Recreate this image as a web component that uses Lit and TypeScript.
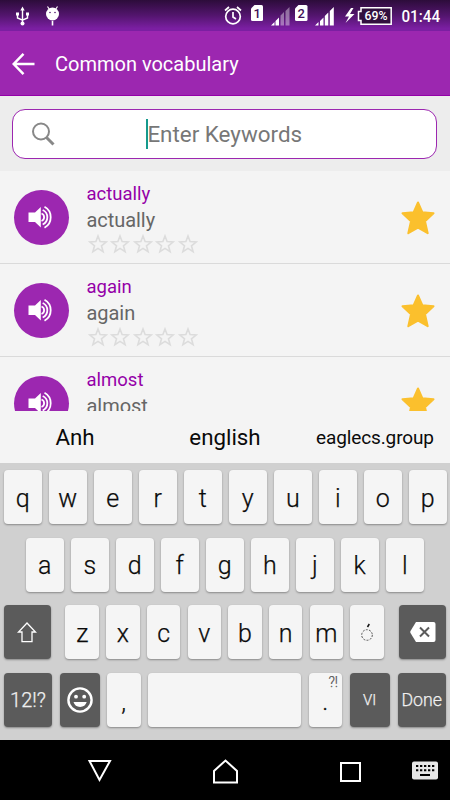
import { LitElement, html, css } from "lit";
import { customElement, property } from "lit/decorators.js";

@customElement("status-bar")
class StatusBar extends LitElement {
  static styles = css`
    :host { display: flex; height: 31px; background: linear-gradient(#2c0c3a, #53156e 50%, #7b1fa2 92%); color: #fff; }
    svg { display: block; width: 450px; height: 31px; }
    text { font-family: Roboto, sans-serif; font-weight: 500; }
  `;
  render() {
    return html`<svg viewBox="0 0 450 31" fill="#fff">
      <g fill="none" stroke="#fff" stroke-width="1.400">
        <path d="M22.500 9v15M17.500 14v4l5 2.200M27.500 14v4l-5 2.200"/>
      </g>
      <path d="M22.500 6.500l2.200 4h-4.400zM16 12.500h3v3h-3zM26 12.500h3v3h-3z"/><circle cx="22.500" cy="23.500" r="2"/>
      <circle cx="52.500" cy="14" r="6.500"/>
      <path d="M47.500 6.500l2 3M57.500 6.500l-2 3" stroke="#fff" stroke-width="1.200"/>
      <path d="M51.700 21h1.600v4.500h-1.600z"/>
      <circle cx="50" cy="12.500" r=".8" fill="#53156e"/><circle cx="55" cy="12.500" r=".8" fill="#53156e"/>
      <g fill="none" stroke="#fff" stroke-width="1.700">
        <circle cx="233" cy="16.500" r="7.300"/><path d="M233 12v5l3 2M225 10.500l4-3.500M241 10.500l-4-3.500"/>
      </g>
      <path d="M254.500 5h7A1.500 1.500 0 0 1 263 6.500v13a1.500 1.500 0 0 1-1.500 1.500h-9a1.500 1.500 0 0 1-1.500-1.500V8.500z"/>
      <path d="M298.500 5h7.500a1.500 1.500 0 0 1 1.500 1.500v13A1.500 1.500 0 0 1 306 21h-9.500a1.500 1.500 0 0 1-1.500-1.500V8.500z"/>
      <text x="257.200" y="18" font-size="13" text-anchor="middle" fill="#43115a">1</text>
      <text x="301.300" y="18" font-size="13" text-anchor="middle" fill="#43115a">2</text>
      <path d="M271 25.500l3.500-3.500v3.500zM275.500 21l3.500-3.500v8h-3.500z"/>
      <path opacity=".4" d="M280.500 15.500l3.500-3.500v13.500h-3.500zM285.500 11l4-4v18.500h-4z"/>
      <path d="M315 25.500l3.500-3.500v3.500zM320 21l3.500-3.500v8h-3.500zM324.800 16l3.500-3.500v13h-3.500zM329.800 11l4-4v18.500h-4z"/>
      <path d="M351 8l-6 8.500h4l-3.500 6.500 9-9h-4.500l3.500-6z"/>
      <path d="M361 7.700h30.200v16.500H361v-3.700h-2.500v-9h2.500z" fill="#31103f" stroke="#fff" stroke-width="1.500"/>
      <text x="364.500" y="20.300" font-size="12.500" textLength="23" lengthAdjust="spacingAndGlyphs">69%</text>
      <text x="401.500" y="21.500" font-size="16" textLength="38.500" lengthAdjust="spacingAndGlyphs">01:44</text>
    </svg>`;
  }
}

@customElement("word-row")
class WordRow extends LitElement {
  @property() word = "";
  static styles = css`
    :host { display: flex; box-sizing: border-box; height: 93.100px; flex: none; border-bottom: 1px solid #dadada; padding: 0 14px 0 14px; }
    .speaker { width: 55px; height: 55px; margin-top: 19px; border-radius: 50%; background: #9c27b0; }
    .words { flex: 1; margin-left: 17.500px; padding-top: 11px; }
    .term { font-size: 18.500px; line-height: 24px; color: #9400a8; }
    .meaning { font-size: 20px; letter-spacing: -.05px; line-height: 28px; color: #666; }
    .rating { display: flex; margin-left: -1px; }
    .fav { width: 36px; height: 36px; margin-top: 29px; }
    svg { display: block; }
  `;
  render() {
    return html`
      <div class="speaker"><svg width="55" height="55" viewBox="0 0 55 55"><path d="M14.500 22.500h6.500l5.800-5.500v20.500L21 32h-6.500z" fill="#fff"/><g fill="none" stroke="#fff" stroke-width="1.800"><path d="M27.500 23.500a4 4 0 0 1 0 7.500M28.700 20a8 8 0 0 1 0 14.500M30.500 16.800a12 12 0 0 1 0 21"/></g></svg></div>
      <div class="words">
        <div class="term">${this.word}</div>
        <div class="meaning">${this.word}</div>
        <div class="rating">${[0, 1, 2, 3, 4].map(() => html`<svg width="22.500" height="20" viewBox="0 0 22.500 20"><path d="M12 2l2.100 5.600 6 .4-4.600 3.800 1.600 5.900-5.100-3.300-5.100 3.300 1.600-5.900L3.900 8l6-.4z" fill="none" stroke="#dcdcdc" stroke-width="1.600"/></svg>`)}</div>
      </div>
      <svg class="fav" viewBox="0 0 36 36"><path d="M18 2.500l4.300 9.700 11.200 1.100-8.500 7.900 2.700 12-9.700-5.500-9.700 5.500 2.700-12-8.500-7.900 11.200-1.100z" fill="#fbc02d" stroke="#fbc02d" stroke-width="2" stroke-linejoin="round"/></svg>
    `;
  }
}

@customElement("soft-keyboard")
class SoftKeyboard extends LitElement {
  static styles = css`
    :host { display: block; height: 329px; background: #d0d0d0; color: #0a0a0a; }
    .suggest { display: grid; grid-template-columns: repeat(3, 150px); height: 52px; background: #f4f4f4; align-items: center; text-align: center; font-size: 22.300px; }
    .suggest .long { font-size: 19px; letter-spacing: -.12px; }
    .row { display: grid; height: 54px; margin-bottom: 13.500px; }
    .r1 { padding-left: 4px; grid-template-columns: repeat(10, 37.500px); column-gap: 7.500px; margin-top: 7px; }
    .r2 { padding-left: 26px; grid-template-columns: repeat(9, 37.500px); column-gap: 7.500px; }
    .r3 { padding-left: 4px; grid-template-columns: 47px .1px repeat(8, 33.500px) .6px 47px; column-gap: 7.200px; }
    .r4 { padding-left: 4px; grid-template-columns: 48px 40px 33.500px 153px 33.500px 40.500px 48.500px; column-gap: 7.500px; margin-bottom: 0; }
    .key { display: flex; align-items: center; justify-content: center; background: #f5f5f5; border-radius: 4px; box-shadow: 0 1px 2px rgba(0,0,0,.35); font-size: 25px; font-weight: 300; -webkit-text-stroke: .25px currentColor; position: relative; padding-top: 2px; box-sizing: border-box; }
    .dark { background: #5b5b5b; color: #f0f0f0; font-size: 20px; padding: 0; }
    .done { font-size: 17.800px; }
    .lang { font-size: 15px; }
    .hint { position: absolute; right: 4px; top: 1px; font-size: 14px; color: #555; }
    .low { padding-top: 3px; }
    svg { display: block; flex: none; }
  `;
  render() {
    const keys = (s: string) => [...s].map((c) => html`<div class="key">${c}</div>`);
    return html`
      <div class="suggest"><span>Anh</span><span>english</span><span class="long">eaglecs.group</span></div>
      <div class="row r1">${keys("qwertyuiop")}</div>
      <div class="row r2">${keys("asdfghjkl")}</div>
      <div class="row r3">
        <div class="key dark"><svg width="47" height="54" viewBox="0 0 47 54"><path d="M23 18l8.500 9H28v9.700H18V27h-3.500z" fill="none" stroke="#fff" stroke-width="1.300"/></svg></div>
        <span></span>${keys("zxcvbnm")}
        <div class="key"><svg width="34" height="51" viewBox="0 0 34 51"><circle cx="17" cy="27" r="5.300" fill="none" stroke="#555" stroke-width="1" stroke-dasharray="2 1.300"/><path d="M17.500 19l1.800-3" stroke="#111" stroke-width="1.500"/></svg></div>
        <span></span>
        <div class="key dark"><svg width="47" height="54" viewBox="0 0 47 54"><path d="M17 17h17.500a2 2 0 0 1 2 2v16a2 2 0 0 1-2 2H17l-5.500-9a2 2 0 0 1 0-2z" fill="#fff"/><path d="M21 22.500l9 9M30 22.500l-9 9" stroke="#5b5b5b" stroke-width="2"/></svg></div>
      </div>
      <div class="row r4">
        <div class="key dark">12!?</div>
        <div class="key dark"><svg width="40" height="54" viewBox="0 0 40 54"><circle cx="20" cy="27" r="11.600" fill="none" stroke="#fff" stroke-width="2.400"/><circle cx="16" cy="23.700" r="1.900" fill="#fff"/><circle cx="24.200" cy="23.700" r="1.900" fill="#fff"/><path d="M13.500 29h13.200a6.900 6.900 0 0 1-13.200 0z" fill="#fff"/></svg></div>
        <div class="key low">,</div>
        <div class="key"></div>
        <div class="key low">.<span class="hint">?!</span></div>
        <div class="key dark lang">VI</div>
        <div class="key dark done">Done</div>
      </div>
    `;
  }
}

@customElement("app-root")
class AppRoot extends LitElement {
  static styles = css`
    :host { display: flex; flex-direction: column; width: 450px; height: 800px; overflow: hidden; background: #f4f4f4; font-family: Roboto, sans-serif; }
    .bar { display: flex; align-items: center; box-sizing: border-box; height: 65px; background: #9c27b0; border-bottom: 1px solid #9400a8; color: #fff; font-size: 20px; padding: 2px 0 0 12px; gap: 20px; }
    .search { box-sizing: border-box; height: 75px; background: #ededed; padding: 13px 13px 12px 12.400px; }
    .box { display: flex; align-items: center; box-sizing: border-box; height: 50px; border: 1px solid #9c27b0; border-radius: 13px; background: #fff; color: #777; font-size: 22.400px; padding-left: 17.500px; }
    .caret { width: 2px; height: 30px; background: #159a8c; margin: 0 -1px 0 91.500px; }
    .list { height: 240px; overflow: hidden; display: flex; flex-direction: column; }
    .nav { flex: 1; background: #000; }
    svg { display: block; flex: none; }
  `;
  render() {
    return html`
      <status-bar></status-bar>
      <div class="bar"><svg width="23" height="24" viewBox="0 0 23 24" fill="none" stroke="#fff" stroke-width="2.500"><path d="M22.500 12H2M11.500 1.800L1.700 12l9.800 10.200"/></svg><span>Common vocabulary</span></div>
      <div class="search"><div class="box">
        <svg width="24" height="24" viewBox="0 0 24 24" fill="none" stroke="#888"><circle cx="10" cy="9.500" r="8" stroke-width="2"/><path d="M15.500 15.500L22.500 22.500" stroke-width="3"/></svg>
        <span class="caret"></span><span>Enter Keywords</span>
      </div></div>
      <div class="list">${["actually", "again", "almost"].map((w) => html`<word-row .word=${w}></word-row>`)}</div>
      <soft-keyboard></soft-keyboard>
      <div class="nav"><svg width="450" height="60" viewBox="0 0 450 60" fill="none" stroke="#fff" stroke-width="2">
        <path d="M89.500 21h20.500l-10.500 19z"/>
        <path d="M214 42.500V31l11.500-10.500L237 31v11.500z"/>
        <path d="M341 23h19v18h-19z"/>
        <rect x="412" y="21.500" width="26" height="18" rx="2" fill="#e6e6e6" stroke="none"/>
        <path d="M416 26h18.500M416 30.300h18.500" stroke="#000" stroke-dasharray="2.300 1.700"/><path d="M420 35h10" stroke="#000"/>
      </svg></div>
    `;
  }
}
